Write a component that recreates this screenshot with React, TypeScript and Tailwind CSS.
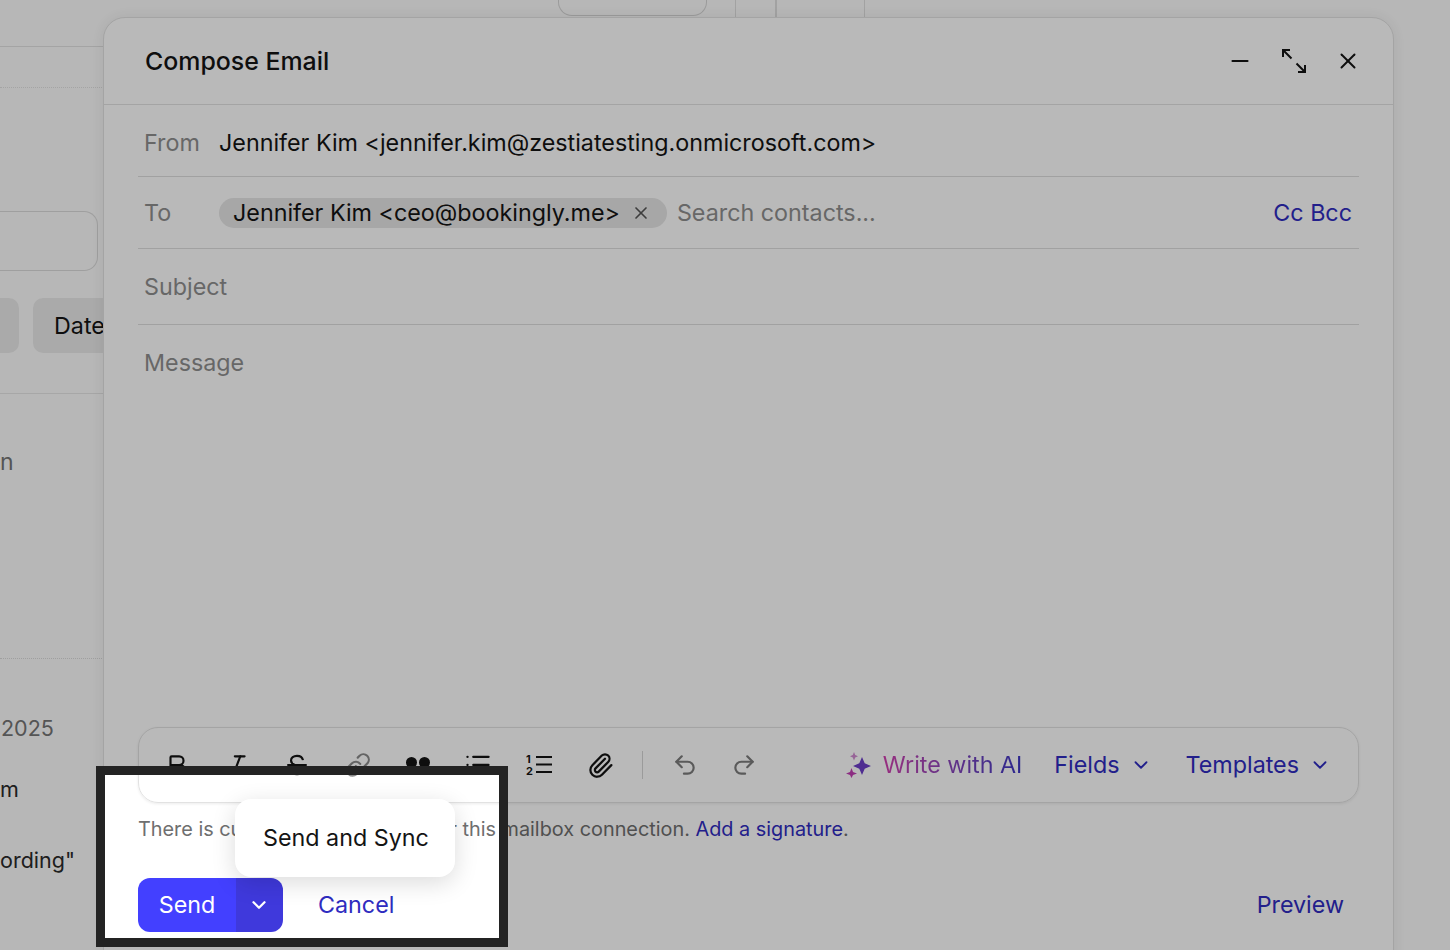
import React from 'react';
import {
  Bold,
  ChevronDown,
  Italic,
  Link,
  List,
  Minus,
  Paperclip,
  Redo2,
  Undo2,
  X,
} from 'lucide-react';

const ExpandIcon = () => (
  <svg viewBox="0 0 26 26" className="h-[26px] w-[26px]" fill="none" stroke="currentColor" strokeWidth="2">
    <path d="M2 9V2h7M2 2l8.500 8.500M24 17v7h-7M24 24l-8.500-8.500" />
  </svg>
);

const StrikeIcon = () => (
  <svg viewBox="0 0 24 24" className="h-[26px] w-[26px]" fill="none" stroke="currentColor" strokeWidth="2">
    <path d="M17.500 7.500C17 5 14.800 3.500 12 3.500c-3.200 0-5.500 1.800-5.500 4.300 0 2 1.300 3.300 3.500 4.200M3 12h18M6.500 16.500c.5 2.500 2.700 4 5.500 4 3.200 0 5.500-1.800 5.500-4.300 0-1.700-.8-3.200-2.300-4.200" />
  </svg>
);

const QuoteIcon = () => (
  <svg viewBox="0 0 26 26" className="h-[26px] w-[26px]" fill="currentColor">
    <circle cx="6.500" cy="10.500" r="5.500" />
    <circle cx="19.500" cy="10.500" r="5.500" />
    <path d="M2 12c0 3 1 5 3 6l2-5zM15 12c0 3 1 5 3 6l2-5z" />
  </svg>
);

const NumberedIcon = () => (
  <svg viewBox="0 0 26 22" className="h-[22px] w-[26px]">
    <text x="0" y="9" fontSize="11" fontWeight="700" fill="currentColor" fontFamily="Inter, sans-serif">1</text>
    <text x="0" y="21" fontSize="11" fontWeight="700" fill="currentColor" fontFamily="Inter, sans-serif">2</text>
    <path d="M10 3h16M10 10.500h16M10 18h16" stroke="currentColor" strokeWidth="2" />
  </svg>
);

const SparkIcon = () => (
  <svg viewBox="0 0 26 26" className="h-[26px] w-[26px]">
    <path d="M16 5l2.700 6.300L25 14l-6.300 2.700L16 23l-2.700-6.300L7 14l6.300-2.700z" fill="#6d3fc8" />
    <path d="M5.500 16l1.500 4 4 1.500-4 1.500-1.500 3L4 23l-4-1.500L4 20z" fill="#c13fb4" />
    <path d="M8 0l1.200 3L12 4.200 9.200 5.400 8 8.500 6.800 5.400 4 4.200 6.800 3z" fill="#d08ad0" />
  </svg>
);

const ToolButton = ({ children, className }: { children: React.ReactNode; className?: string }) => (
  <button className={`flex h-8 w-[60px] items-center justify-center ${className ?? ''}`}>{children}</button>
);

export default function App() {
  return (
    <div className="relative h-[950px] w-[1450px] overflow-hidden bg-[#fdfdfd] font-['Inter',sans-serif] text-[#141414]">
      {/* Page behind the modal */}
      <div className="flex h-full">
        <div className="w-[104px] shrink-0">
          <div className="h-[47px] border-b border-[#e2e2e2]" />
          <div className="h-[41px] border-b border-dotted border-[#e2e2e2]" />
          <div className="h-[123px]" />
          <div className="h-[60px] w-[98px] rounded-r-[14px] border border-l-0 border-[#dcdcdc]" />
          <div className="mt-[27px] flex h-[55px] gap-[14px]">
            <div className="h-full w-[19px] rounded-r-[10px] bg-[#ebebeb]" />
            <div className="flex h-full flex-1 items-center overflow-hidden rounded-l-[10px] bg-[#ebebeb] pl-[21px] pt-[2px] text-[23.300px] whitespace-nowrap">
              Date
            </div>
          </div>
          <div className="h-[41px] border-b border-[#e6e6e6]" />
          <div className="flex h-[138px] items-center pb-[1px] text-[23px] text-[#757575]">n</div>
          <div className="h-[127px] border-b border-dotted border-[#dcdcdc]" />
          <div className="mt-[54px] pl-[1px] text-[21.500px] leading-[30px] text-[#757575]">2025</div>
          <div className="mt-[31px] text-[21.500px] leading-[30px] text-[#2a2a2a]">m</div>
          <div className="mt-[41px] text-[21.500px] leading-[30px] text-[#2a2a2a]">ording"</div>
        </div>
        <div className="flex h-[18px] flex-1">
          <div className="ml-[454px] h-[16px] w-[149px] rounded-b-[14px] border border-t-0 border-[#d6d6d6]" />
          <div className="ml-[28px] h-full w-[40px] border-l border-[#e0e0e0]" />
          <div className="h-full w-[90px] border-x border-[#e0e0e0] border-l-2" />
        </div>
      </div>

      {/* Compose modal */}
      <div className="absolute left-[103px] top-[17px] flex h-[960px] w-[1291px] flex-col rounded-t-[22px] border border-[#e2e2e2] bg-white shadow-[0_0_16px_rgba(0,0,0,0.08)]">
        <div className="flex h-[87px] shrink-0 items-center justify-between border-b border-[#e2e2e2] pl-[41px] pr-[32px]">
          <h1 className="pt-[2px] text-[24.900px] font-medium">Compose Email</h1>
          <div className="flex items-center gap-[28px]">
            <Minus className="h-[26px] w-[26px]" strokeWidth={1.8} />
            <ExpandIcon />
            <X className="h-[26px] w-[26px]" strokeWidth={1.8} />
          </div>
        </div>

        <div className="flex flex-1 flex-col px-[34px]">
          <div className="flex h-[72px] shrink-0 items-center border-b border-[#dedede] px-[6px] pt-[6px] text-[23.300px]">
            <span className="w-[75px] text-[#8f8f8f]">From</span>
            <span>Jennifer Kim &lt;jennifer.kim@zestiatesting.onmicrosoft.com&gt;</span>
          </div>
          <div className="flex h-[72px] shrink-0 items-center border-b border-[#dedede] pl-[6px] pr-[7px] text-[23.300px]">
            <span className="w-[75px] pt-[2px] text-[#8f8f8f]">To</span>
            <span className="flex h-[30px] items-center rounded-full bg-[#e6e6e6] pl-[14px] pr-[16px]">
              <span className="pt-[2px]">Jennifer Kim &lt;ceo@bookingly.me&gt;</span>
              <X className="ml-[11px] h-5 w-5 text-[#555]" strokeWidth={2} />
            </span>
            <span className="ml-[10px] pt-[2px] text-[#8f8f8f]">Search contacts...</span>
            <span className="ml-auto pt-[2px] text-[#2f2cc0]">Cc Bcc</span>
          </div>
          <div className="flex h-[76px] shrink-0 items-center border-b border-[#dedede] px-[6px] pt-[2px] text-[23.300px] text-[#8f8f8f]">
            Subject
          </div>
          <div className="flex-1 px-[6px] pt-[20px] text-[23.300px] leading-[36px] text-[#8f8f8f]">Message</div>

          {/* Editor toolbar */}
          <div className="flex h-[76px] shrink-0 items-center rounded-[20px] border border-[#e2e2e2] pl-[8px] pr-[27px] shadow-[0_1px_3px_rgba(0,0,0,0.08)]">
            <ToolButton><Bold className="h-[26px] w-[26px]" strokeWidth={2} /></ToolButton>
            <ToolButton><Italic className="h-[26px] w-[26px]" strokeWidth={2} /></ToolButton>
            <ToolButton><StrikeIcon /></ToolButton>
            <ToolButton className="ml-[1px] text-[#8a8a8a]"><Link className="h-[26px] w-[26px]" strokeWidth={2} /></ToolButton>
            <ToolButton><QuoteIcon /></ToolButton>
            <ToolButton><List className="h-[28px] w-[28px]" strokeWidth={2} /></ToolButton>
            <ToolButton className="ml-[1px]"><NumberedIcon /></ToolButton>
            <ToolButton className="ml-[1px]"><Paperclip className="h-[27px] w-[27px]" strokeWidth={2} /></ToolButton>
            <div className="ml-[12px] h-[28px] w-px bg-[#d6d6d6]" />
            <ToolButton className="ml-[12px] text-[#7c7c7c]"><Undo2 className="h-[26px] w-[26px]" strokeWidth={2} /></ToolButton>
            <ToolButton className="-ml-[1px] text-[#7c7c7c]"><Redo2 className="h-[26px] w-[26px]" strokeWidth={2} /></ToolButton>
            <div className="ml-auto flex items-center text-[23.300px] text-[#2f2cc0]">
              <SparkIcon />
              <span className="ml-[11px] bg-gradient-to-r from-[#d13fb0] to-[#3a34c4] bg-clip-text text-transparent">
                Write with AI
              </span>
              <span className="ml-[32px]">Fields</span>
              <ChevronDown className="ml-[10px] h-[22px] w-[22px]" strokeWidth={2} />
              <span className="ml-[34px]">Templates</span>
              <ChevronDown className="ml-[10px] h-[22px] w-[22px]" strokeWidth={2} />
            </div>
          </div>

          <p className="mt-[13px] text-[19.850px] leading-[26px] text-[#6f6f6f]">
            There is currently no signature for this mailbox connection.{' '}
            <span className="text-[#2f2cc0]">Add a signature</span>.
          </p>

          <div className="mt-[36px] mb-[44px] flex h-[54px] shrink-0 items-center text-[23.300px]">
            <div className="flex h-full w-[145px] overflow-hidden rounded-[12px] text-white">
              <span className="flex w-[98px] items-center justify-center bg-[#4340ff]">Send</span>
              <span className="flex flex-1 items-center justify-center bg-[#3f39dc]">
                <ChevronDown className="-ml-[2px] h-[22px] w-[22px]" strokeWidth={2.5} />
              </span>
            </div>
            <span className="ml-[35px] text-[#2f2cc0]">Cancel</span>
            <span className="ml-auto mr-[15px] text-[#2f2cc0]">Preview</span>
          </div>
        </div>
      </div>

      {/* Send menu */}
      <div className="absolute left-[235px] top-[799px] z-10 flex h-[78px] w-[220px] items-center rounded-[16px] bg-white pl-[28px] text-[23.300px] shadow-[0_6px_24px_rgba(0,0,0,0.14)]">
        Send and Sync
      </div>

      {/* Highlight frame, everything outside it is dimmed */}
      <div className="absolute left-[96px] top-[766px] z-20 h-[181px] w-[412px] border-[9px] border-[#232323] shadow-[0_0_0_2000px_rgba(0,0,0,0.275)]" />
    </div>
  );
}
